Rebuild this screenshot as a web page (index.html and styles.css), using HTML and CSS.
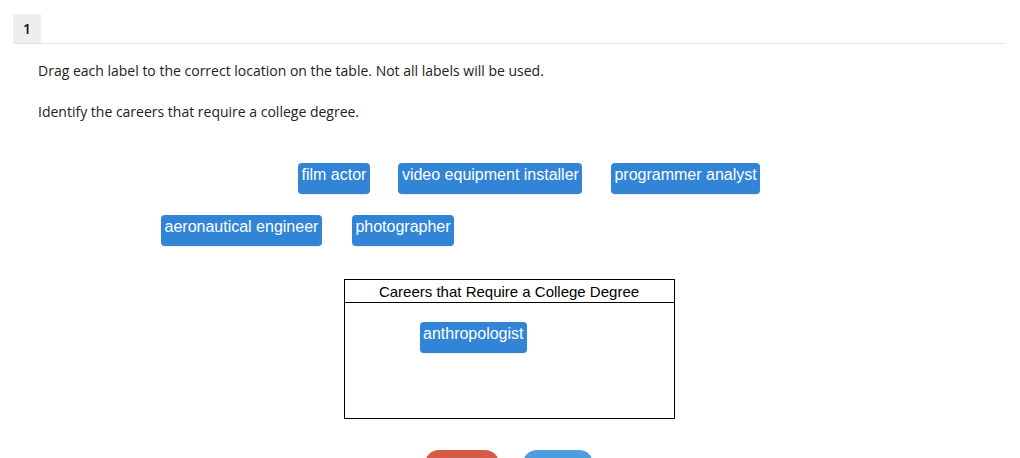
FILE: index.html
```html
<!DOCTYPE html>
<html>
<head>
<meta charset="utf-8">
<link rel="stylesheet" href="styles.css">
</head>
<body>
<div class="page">
  <div class="tabbar"><div class="tab">1</div></div>
  <div class="question">
    <p class="instr">Drag each label to the correct location on the table. Not all labels will be used.</p>
    <p class="instr second">Identify the careers that require a college degree.</p>
  </div>
  <div class="labels">
    <div class="row row1">
      <div class="label">film actor</div>
      <div class="label">video equipment installer</div>
      <div class="label">programmer analyst</div>
    </div>
    <div class="row row2">
      <div class="label">aeronautical engineer</div>
      <div class="label">photographer</div>
    </div>
  </div>
  <div class="table-wrap">
    <div class="table">
      <div class="thead">Careers that Require a College Degree</div>
      <div class="tbody"><div class="label">anthropologist</div></div>
    </div>
  </div>
  <div class="buttons">
    <div class="btn btn-red"></div>
    <div class="btn btn-blue"></div>
  </div>
</div>
</body>
</html>
```
FILE: styles.css
```css
html, body {
  margin: 0;
  padding: 0;
  background: #ffffff;
  overflow: hidden;
}
body {
  font-family: "Open Sans", "Liberation Sans", sans-serif;
  font-size: 14px;
  color: #222;
  height: 458px;
}
.page {
  padding: 14px 15px 0 13px;
}
.tabbar {
  display: flex;
  border-bottom: 1px solid #e4e4e4;
}
.tab {
  width: 28px;
  height: 29px;
  background: #eeeeee;
  font-weight: 600;
  font-size: 14px;
  line-height: 29px;
  text-align: center;
  color: #111;
}
.question {
  padding-left: 25px;
  padding-top: 17px;
}
.instr {
  margin: 0;
  line-height: 20px;
  color: #222;
}
.instr.second {
  margin-top: 21px;
}
.labels {
  display: flex;
  flex-direction: column;
  gap: 21px;
  margin-top: 41px;
}
.row {
  display: flex;
  gap: 30px;
}
.row1 { padding-left: 285px; gap: 28.5px; }
.row2 { padding-left: 148px; }
.label {
  box-sizing: border-box;
  height: 31px;
  padding: 3px 3.5px 0;
  background: #3184d6;
  color: #fff;
  font-family: "Liberation Sans", Arial, sans-serif;
  font-size: 16px;
  line-height: 18px;
  border-radius: 4px;
  white-space: nowrap;
  box-shadow: 0 1px 1px rgba(0,0,0,0.08);
}
.table-wrap {
  display: flex;
  justify-content: center;
  margin-top: 33px;
}
.table {
  box-sizing: border-box;
  width: 331px;
  height: 140px;
  border: 1px solid #000;
  display: flex;
  flex-direction: column;
}
.thead {
  height: 22px;
  border-bottom: 1px solid #000;
  font-family: "Liberation Sans", Arial, sans-serif;
  font-size: 15px;
  line-height: 23px;
  text-align: center;
  color: #000;
}
.tbody {
  flex: 1;
  display: flex;
  align-items: flex-start;
  padding: 19px 0 0 75px;
}
.buttons {
  display: flex;
  justify-content: center;
  gap: 24px;
  margin-top: 31px;
  margin-left: -1px;
}
.btn {
  height: 36px;
  border-radius: 14px;
}
.btn-red {
  width: 74px;
  background: #d65a45;
}
.btn-blue {
  width: 70px;
  background: #4d9de0;
}
```
